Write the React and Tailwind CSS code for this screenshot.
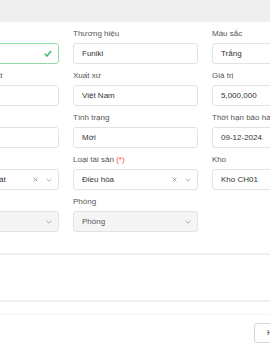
import React from "react";

function Chevron() {
  return (
    <svg width="6" height="4" viewBox="0 0 6 4" className="shrink-0">
      <path d="M0.5 0.8 L3 3.2 L5.5 0.8" fill="none" stroke="#9a9a9a" strokeWidth="0.8" />
    </svg>
  );
}

function Clear() {
  return (
    <svg width="5" height="5" viewBox="0 0 5 5" className="shrink-0">
      <path d="M0.6 0.6 L4.4 4.4 M4.4 0.6 L0.6 4.4" fill="none" stroke="#8a8a8a" strokeWidth="0.8" />
    </svg>
  );
}

function Check() {
  return (
    <svg width="8" height="7" viewBox="0 0 8 7" className="shrink-0">
      <path d="M0.8 3.8 L3 6 L7.2 1" fill="none" stroke="#3dbb6a" strokeWidth="1.5" />
    </svg>
  );
}

function Field({ label, required, children }) {
  return (
    <div className="flex flex-col">
      <div className="h-[12px] leading-[12px] mb-[3px] text-[8px] text-[#555] whitespace-nowrap">
        {label}
        {required && <span className="text-[#ff4d4f]"> (*)</span>}
      </div>
      {children}
    </div>
  );
}

function Input({ value, ok, select, clear, disabled }) {
  return (
    <div
      className={
        "h-[21px] rounded-[3px] border flex items-center pl-[8px] pr-[6px] text-[8px] whitespace-nowrap overflow-hidden " +
        (ok ? "border-[#8fdcaa] " : "border-[#e3e3e3] ") +
        (disabled ? "bg-[#f5f5f5] text-[#555] " : "bg-white text-[#333] ")
      }
    >
      <span className="flex-1 overflow-hidden">{value}</span>
      {ok && <Check />}
      {clear && <span className="mr-[8px] flex"><Clear /></span>}
      {select && <Chevron />}
    </div>
  );
}

export default function App() {
  return (
    <div className="w-[270px] h-[350px] overflow-hidden bg-white font-['Liberation_Sans',Arial,sans-serif]">
      <div className="h-[22px] bg-[#efefef]" />
      <div className="ml-[-66px] pt-[6px] grid grid-cols-[125px_125px_125px] gap-x-[14px] gap-y-[6px] w-[403px]">
        <Field label="Ngày sản xuất">
          <Input value="" ok />
        </Field>
        <Field label="Thương hiệu">
          <Input value="Funiki" />
        </Field>
        <Field label="Màu sắc">
          <Input value="Trắng" />
        </Field>

        <Field label="Thời điểm sản xuất">
          <Input value="" />
        </Field>
        <Field label="Xuất xứ">
          <Input value="Việt Nam" />
        </Field>
        <Field label="Giá trị">
          <Input value="5,000,000" />
        </Field>

        <Field label="Năm sử dụng">
          <Input value="" />
        </Field>
        <Field label="Tình trạng">
          <Input value="Mới" />
        </Field>
        <Field label="Thời hạn bảo hành">
          <Input value="09-12-2024" />
        </Field>

        <Field label="Nhà cung cấp">
          <Input value="Nguyễn Văn Phát" select clear />
        </Field>
        <Field label="Loại tài sản" required>
          <Input value="Điều hòa" select clear />
        </Field>
        <Field label="Kho">
          <Input value="Kho CH01" />
        </Field>

        <Field label="Tầng">
          <Input value="" select disabled />
        </Field>
        <Field label="Phòng">
          <Input value="Phòng" select disabled />
        </Field>
        <div />
      </div>
      <div className="mt-[21px] h-[49px] border-y-2 border-[#f0f0f0]" />
      <div className="mt-[12px] border-t border-[#f5f5f5] pt-[8px] flex">
        <div className="ml-[254px] h-[20px] w-[44px] shrink-0 rounded-[3px] border border-[#d6d6d6] bg-white text-[8px] text-[#333] flex items-center pl-[12px]">
          Hủy
        </div>
      </div>
    </div>
  );
}
